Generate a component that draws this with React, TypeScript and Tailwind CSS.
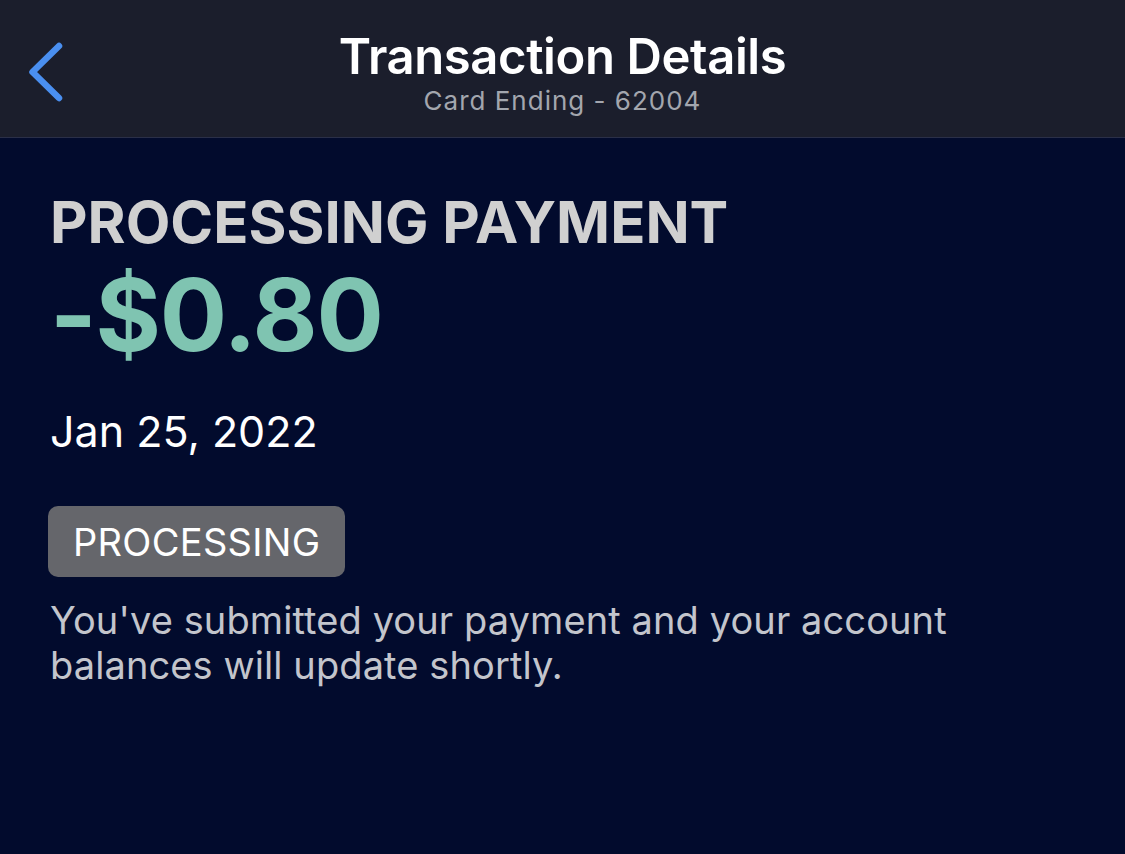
import React from "react";

export default function App() {
  return (
    <div
      className="w-[1125px] h-[854px] bg-[#020b2d] flex flex-col overflow-hidden"
      style={{ fontFamily: "Inter, 'Noto Sans', sans-serif" }}
    >
      <header className="h-[138px] bg-[#1b1e2c] border-b border-[#2a2f48] flex items-center relative shrink-0">
        <div className="absolute left-[26px] top-[41px]">
          <svg width="40" height="62" viewBox="0 0 40 62" fill="none">
            <path d="M33 5 L6.5 31 L33 57" stroke="#4a8ff0" strokeWidth="6.5" strokeLinecap="round" strokeLinejoin="round" />
          </svg>
        </div>
        <div className="flex-1 flex flex-col items-center pt-[8px]">
          <div className="text-white font-semibold text-[49px] leading-[56px] tracking-[-0.4px]">Transaction Details</div>
          <div className="text-[#a3a6ae] text-[26px] leading-[32px] tracking-[1px]">Card Ending - 62004</div>
        </div>
      </header>
      <main className="px-[50px] pt-[46px] flex flex-col items-start">
        <div className="text-[#d0d0d0] font-bold text-[58px] leading-[76px] tracking-[0px]">PROCESSING PAYMENT</div>
        <div className="text-[#7fc4b1] font-bold text-[100px] leading-[110px] mt-[0px] tracking-[-1.2px]">-$0.80</div>
        <div className="text-white text-[43px] leading-[50px] mt-[36px]">Jan 25, 2022</div>
        <div className="mt-[50px] ml-[-2px] bg-[#65666b] rounded-[10px] h-[71px] px-[25px] flex items-center">
          <span className="text-white text-[38px] leading-none tracking-[0.3px]">PROCESSING</span>
        </div>
        <p className="text-[#c3c5cc] text-[38px] leading-[45px] mt-[21px] w-[940px] tracking-[0.1px]">
          You've submitted your payment and your account balances will update shortly.
        </p>
      </main>
    </div>
  );
}
